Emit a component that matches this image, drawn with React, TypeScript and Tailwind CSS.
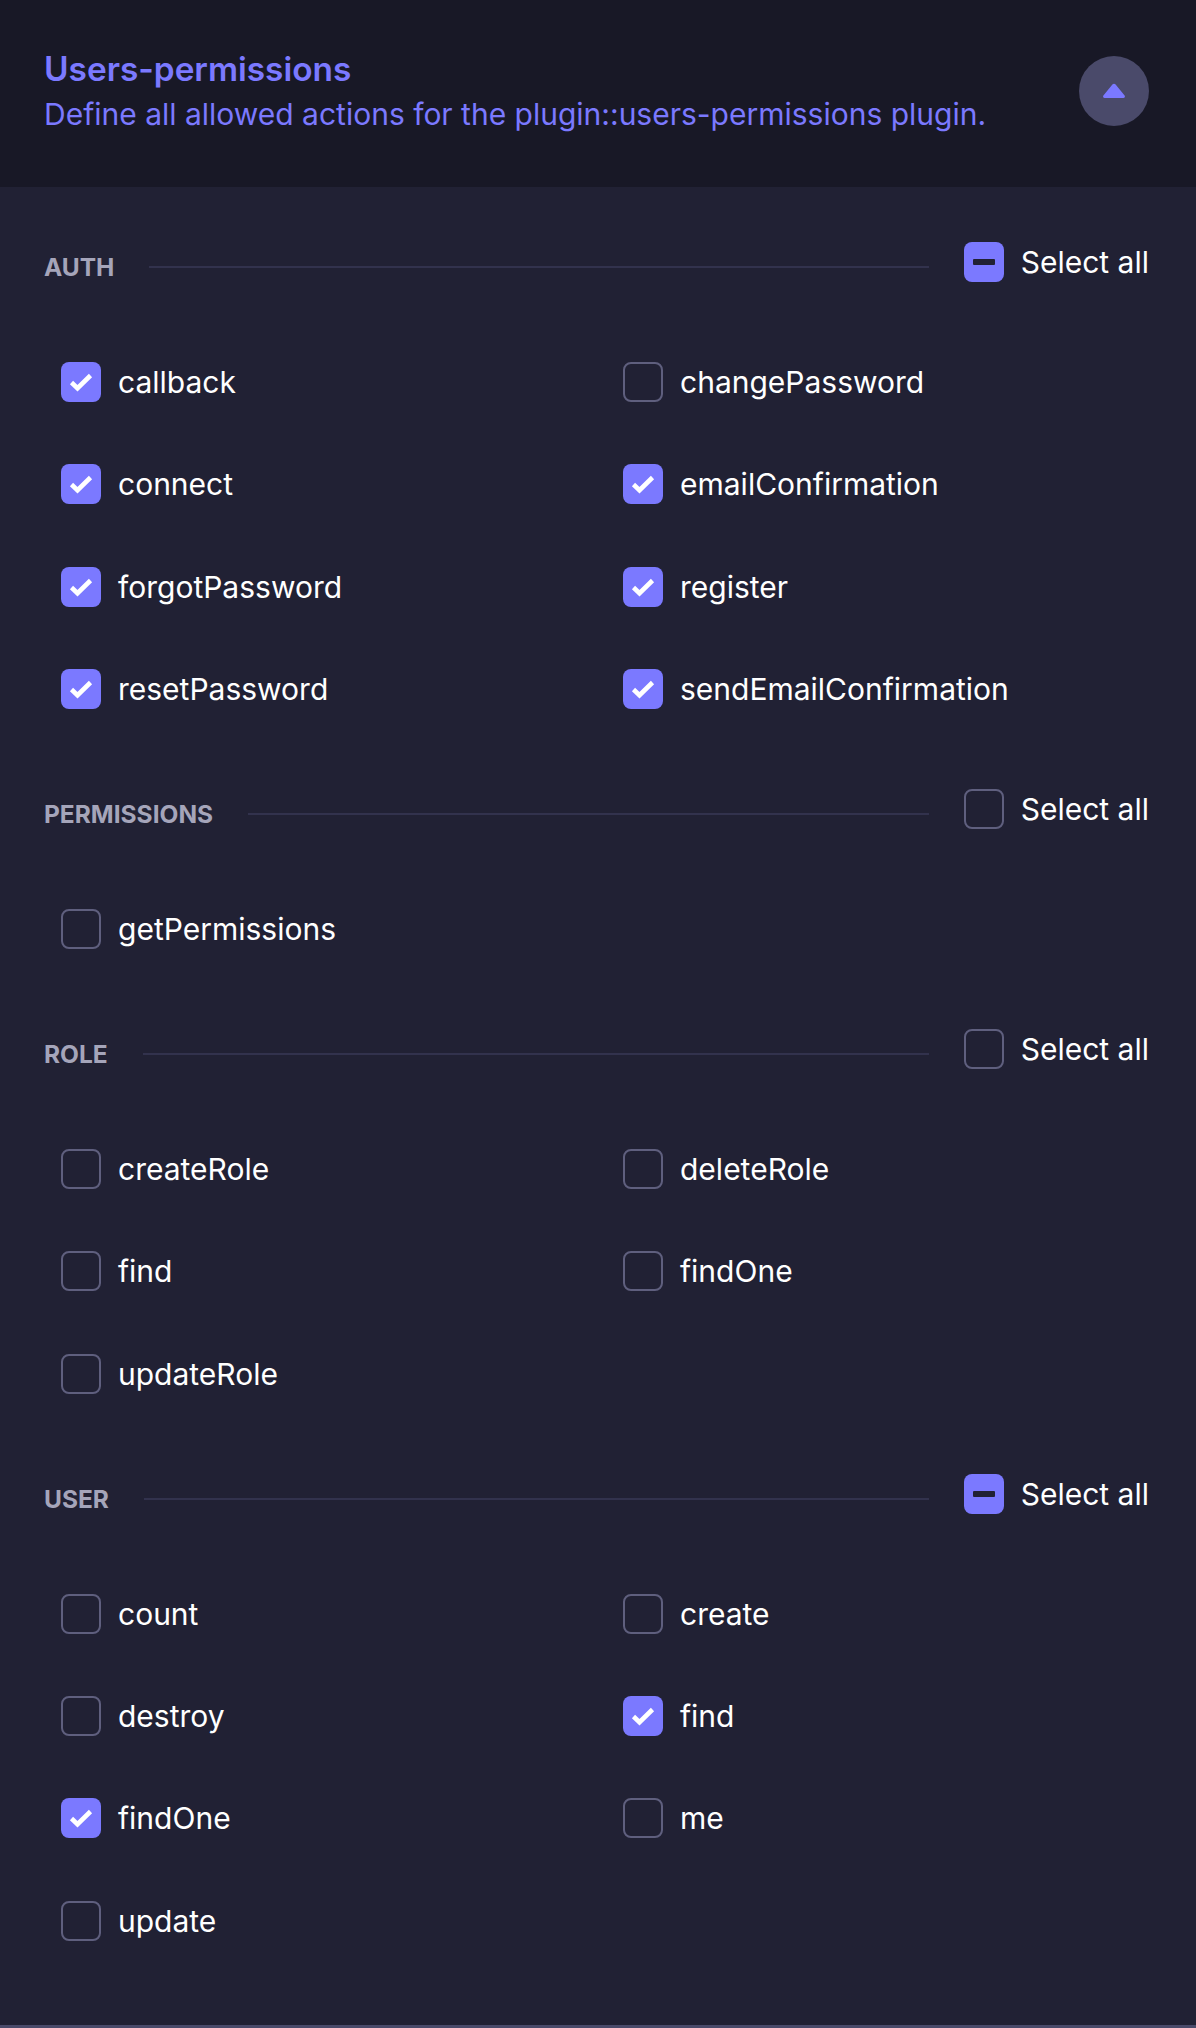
import React, { useState } from "react";

type Section = {
  name: string;
  actions: { name: string; checked: boolean }[];
};

const initialSections: Section[] = [
  {
    name: "auth",
    actions: [
      { name: "callback", checked: true },
      { name: "changePassword", checked: false },
      { name: "connect", checked: true },
      { name: "emailConfirmation", checked: true },
      { name: "forgotPassword", checked: true },
      { name: "register", checked: true },
      { name: "resetPassword", checked: true },
      { name: "sendEmailConfirmation", checked: true },
    ],
  },
  {
    name: "permissions",
    actions: [{ name: "getPermissions", checked: false }],
  },
  {
    name: "role",
    actions: [
      { name: "createRole", checked: false },
      { name: "deleteRole", checked: false },
      { name: "find", checked: false },
      { name: "findOne", checked: false },
      { name: "updateRole", checked: false },
    ],
  },
  {
    name: "user",
    actions: [
      { name: "count", checked: false },
      { name: "create", checked: false },
      { name: "destroy", checked: false },
      { name: "find", checked: true },
      { name: "findOne", checked: true },
      { name: "me", checked: false },
      { name: "update", checked: false },
    ],
  },
];

function Box({ state }: { state: "on" | "off" | "some" }) {
  if (state === "off") {
    return (
      <span className="block h-[40px] w-[40px] shrink-0 rounded-[8px] border-2 border-[#5f5f7e]" />
    );
  }
  return (
    <span className="flex h-[40px] w-[40px] shrink-0 items-center justify-center rounded-[8px] bg-[#7b79ff]">
      {state === "on" ? (
        <svg width="40" height="40" viewBox="0 0 40 40" fill="none">
          <path
            d="M10.5 20.5L16.5 26.2L29.5 13.5"
            stroke="#ffffff"
            strokeWidth="4.6"
            strokeLinejoin="miter"
          />
        </svg>
      ) : (
        <span className="block h-[6px] w-[22px] rounded-[1px] bg-[#212134]" />
      )}
    </span>
  );
}

function PermissionSection({
  section,
  onToggle,
  onToggleAll,
}: {
  section: Section;
  onToggle: (i: number) => void;
  onToggleAll: () => void;
}) {
  const count = section.actions.filter((a) => a.checked).length;
  const all =
    count === 0 ? "off" : count === section.actions.length ? "on" : "some";

  return (
    <section>
      <div className="flex h-[40px] items-center">
        <div className="mt-[10px] flex flex-1 items-center gap-[35px]">
          <span className="text-[24.5px] font-bold uppercase leading-[32px] text-[#a5a5ba]">
            {section.name}
          </span>
          <span className="h-[2px] flex-1 bg-[#32324d]" />
        </div>
        <button
          type="button"
          onClick={onToggleAll}
          className="ml-[35px] flex items-center gap-[17px]"
        >
          <Box state={all} />
          <span className="text-[30px] leading-[40px] text-white">
            Select all
          </span>
        </button>
      </div>
      <div className="mt-[80px] grid grid-cols-[562px_1fr] gap-y-[62.33px] pl-[17px]">
        {section.actions.map((action, i) => (
          <button
            type="button"
            key={action.name}
            onClick={() => onToggle(i)}
            className="flex h-[40px] items-center gap-[17px] text-left"
          >
            <Box state={action.checked ? "on" : "off"} />
            <span className="text-[30px] leading-[40px] text-white">
              {action.name}
            </span>
          </button>
        ))}
      </div>
    </section>
  );
}

export default function App() {
  const [sections, setSections] = useState<Section[]>(initialSections);
  const [open, setOpen] = useState(true);

  const toggle = (s: number, i: number) => {
    setSections((prev) =>
      prev.map((sec, si) =>
        si !== s
          ? sec
          : {
              ...sec,
              actions: sec.actions.map((a, ai) =>
                ai === i ? { ...a, checked: !a.checked } : a
              ),
            }
      )
    );
  };

  const toggleAll = (s: number) => {
    setSections((prev) =>
      prev.map((sec, si) => {
        if (si !== s) return sec;
        const every = sec.actions.every((a) => a.checked);
        return {
          ...sec,
          actions: sec.actions.map((a) => ({ ...a, checked: !every })),
        };
      })
    );
  };

  return (
    <div
      className="min-h-screen bg-[#212134]"
      style={{ fontFamily: "Inter, 'Noto Sans', sans-serif" }}
    >
      <div className="border-b-[3px] border-[#4a4a6a]">
        <header className="flex items-center justify-between bg-[#181826] pb-[55px] pl-[44px] pr-[47px] pt-[49px]">
          <div>
            <h2 className="text-[33.4px] font-semibold leading-[40px] text-[#7b79ff]">
              Users-permissions
            </h2>
            <p className="mt-[7px] text-[30px] leading-[36px] text-[#7b79ff]">
              Define all allowed actions for the plugin::users-permissions
              plugin.
            </p>
          </div>
          <button
            type="button"
            onClick={() => setOpen(!open)}
            className="flex h-[70px] w-[70px] items-center justify-center rounded-full bg-[#4a4a6a]"
          >
            <svg
              width="24"
              height="15"
              viewBox="0 0 24 15"
              className={open ? "" : "rotate-180"}
            >
              <path
                d="M10.4 1.6a2 2 0 0 1 3.2 0l9 11A1.5 1.5 0 0 1 21.4 15H2.6a1.5 1.5 0 0 1-1.2-2.4z"
                fill="#7b79ff"
              />
            </svg>
          </button>
        </header>
        {open && (
          <div className="flex flex-col gap-[80px] pb-[84px] pl-[44px] pr-[47px] pt-[55px]">
            {sections.map((section, s) => (
              <PermissionSection
                key={section.name}
                section={section}
                onToggle={(i) => toggle(s, i)}
                onToggleAll={() => toggleAll(s)}
              />
            ))}
          </div>
        )}
      </div>
    </div>
  );
}
